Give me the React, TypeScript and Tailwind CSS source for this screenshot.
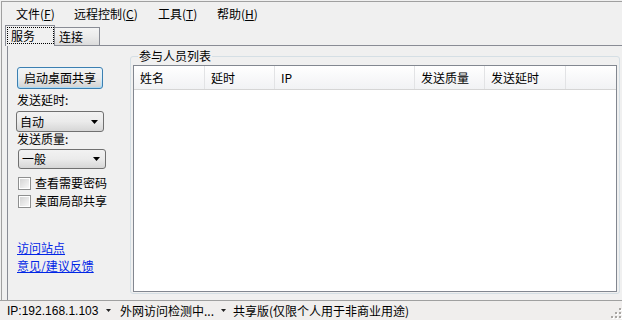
import React from 'react'

const cjk = "font-['Noto_Sans_CJK_SC',sans-serif]"

function Arrow() {
  return (
    <svg width="7" height="4" viewBox="0 0 7 4" className="shrink-0">
      <path d="M0 0h7L3.5 4z" fill="#000" />
    </svg>
  )
}

function SmallArrow() {
  return (
    <svg width="5" height="3" viewBox="0 0 5 3" className="shrink-0">
      <path d="M0 0h5L2.5 3z" fill="#222" />
    </svg>
  )
}

function Combo({ label, className }: { label: string; className: string }) {
  return (
    <div
      className={`flex items-center justify-between w-[88px] border border-[#707070] rounded-[3px] bg-gradient-to-b from-[#f2f2f2] via-[#ebebeb] to-[#d6d6d6] pl-[3px] pr-[5px] ${className}`}
    >
      <span className="leading-[14px]">{label}</span>
      <Arrow />
    </div>
  )
}

function Check({ label, className }: { label: string; className: string }) {
  return (
    <div className={`flex items-center h-[14px] ${className}`}>
      <div className="w-[13px] h-[13px] border border-[#8e8f8f] bg-white p-[1px] ml-[1px]">
        <div className="w-full h-full bg-gradient-to-br from-[#d4d4d4] to-[#f8f8f8]" />
      </div>
      <span className="ml-[4px] leading-[14px]">{label}</span>
    </div>
  )
}

function Grip() {
  const dots = [
    [9, 1],
    [5, 5],
    [9, 5],
    [1, 9],
    [5, 9],
    [9, 9],
  ]
  return (
    <svg width="12" height="12" viewBox="0 0 12 12" className="ml-auto self-end mb-[1px]">
      {dots.map(([x, y]) => (
        <g key={`${x}-${y}`}>
          <rect x={x + 1} y={y + 1} width="2" height="2" fill="#fff" />
          <rect x={x} y={y} width="2" height="2" fill="#a9a6a3" />
        </g>
      ))}
    </svg>
  )
}

const columns = [
  { name: '姓名', w: 'w-[71px]' },
  { name: '延时', w: 'w-[70px]' },
  { name: 'IP', w: 'w-[140px]' },
  { name: '发送质量', w: 'w-[70px]' },
  { name: '发送延时', w: 'w-[81px]' },
]

export default function App() {
  return (
    <div className={`w-[622px] h-[320px] bg-[#f0f0f0] flex flex-col text-[12px] text-black ${cjk}`}>
      <div className="flex-1 flex flex-col ml-px mt-px border-l border-t border-[#a0a0a0] min-h-0">
        {/* menu */}
        <div className="h-[22px] flex items-center pl-[14px] leading-[14px] pt-[2px]">
          <span className="w-[58px]">
            文件(<span className="underline">F</span>)
          </span>
          <span className="w-[84px]">
            远程控制(<span className="underline">C</span>)
          </span>
          <span className="w-[59px]">
            工具(<span className="underline">T</span>)
          </span>
          <span>
            帮助(<span className="underline">H</span>)
          </span>
        </div>

        {/* tabs */}
        <div className="h-[21px] flex items-end pl-[3px]">
          <div className="relative z-10 -mb-px h-[21px] w-[50px] border-t border-l border-r border-[#898c95] bg-[#f0f0f0] pt-[1px] pl-[1px]">
            <div className="h-[17px] w-[47px] border border-dotted border-black flex items-center pl-[3px] leading-[14px]">
              服务
            </div>
          </div>
          <div className="h-[18px] w-[45px] border-t border-r border-[#898c95] bg-gradient-to-b from-[#f4f4f4] via-[#ebebeb] to-[#dcdcdc] flex items-center pl-[4px] leading-[14px]">
            连接
          </div>
        </div>

        {/* panel */}
        <div className="flex-1 flex ml-[5px] border-t border-l border-[#898c95] min-h-0">
          <div className="w-[122px] flex flex-col pl-[9px] pt-[21px]">
            <div className="w-[86px] h-[22px] border border-[#3c7fb1] rounded-[3px] bg-gradient-to-b from-[#eaf6fd] via-[#d9f0fc] to-[#a7d9f5] p-px">
              <div className="w-full h-full rounded-[2px] bg-gradient-to-b from-[#f2f2f2] via-[#ebebeb] to-[#d4d4d4] flex items-center justify-center leading-[14px]">
                启动桌面共享
              </div>
            </div>
            <div className="leading-[14px] mt-[4px]">发送延时:</div>
            <Combo label="自动" className="h-[21px] mt-[4px] -ml-px" />
            <div className="leading-[14px]">发送质量:</div>
            <Combo label="一般" className="h-[20px] mt-[3px] ml-px" />
            <Check label="查看需要密码" className="mt-[7px]" />
            <Check label="桌面局部共享" className="mt-[4px]" />
            <a className="leading-[14px] mt-[33px] text-[#0026e6] underline w-fit" href="#">
              访问站点
            </a>
            <a className="leading-[14px] mt-[4px] text-[#0026e6] underline w-fit" href="#">
              意见/建议反馈
            </a>
          </div>

          <div className="w-[490px] h-[248px] pt-[10px]">
            <div className="relative h-[238px] border border-[#d5dfe5] rounded-[3px] pt-[8px] pb-[1px] px-[2px] flex flex-col">
              <span className="absolute -top-[8px] left-[7px] bg-[#f0f0f0] px-px leading-[14px]">
                参与人员列表
              </span>
              <div className="flex-1 border border-[#828790] bg-white flex flex-col">
                <div className="h-[24px] flex border-b border-[#d5d5d5] bg-gradient-to-b from-white to-[#f1f2f4]">
                  {columns.map((c) => (
                    <div
                      key={c.name}
                      className={`${c.w} h-full border-r border-[#e2e3e5] flex items-center pl-[6px] leading-[14px]`}
                    >
                      {c.name}
                    </div>
                  ))}
                  <div className="flex-1" />
                </div>
                <div className="flex-1" />
              </div>
            </div>
          </div>
        </div>
      </div>

      {/* status bar */}
      <div className="h-[20px] border-t border-[#a0a0a0] bg-[#f0eeed] flex items-center pl-[7px] font-['Liberation_Sans','Noto_Sans_CJK_SC',sans-serif] leading-[14px]">
        <div className="w-[113px] flex items-center">
          <span>IP:192.168.1.103</span>
          <span className="ml-auto mr-[9px]">
            <SmallArrow />
          </span>
        </div>
        <div className="w-[113px] flex items-center">
          <span className={cjk}>外网访问检测中...</span>
          <span className="ml-auto mr-[7px]">
            <SmallArrow />
          </span>
        </div>
        <span className={cjk}>共享版(仅限个人用于非商业用途)</span>
        <Grip />
      </div>
    </div>
  )
}
